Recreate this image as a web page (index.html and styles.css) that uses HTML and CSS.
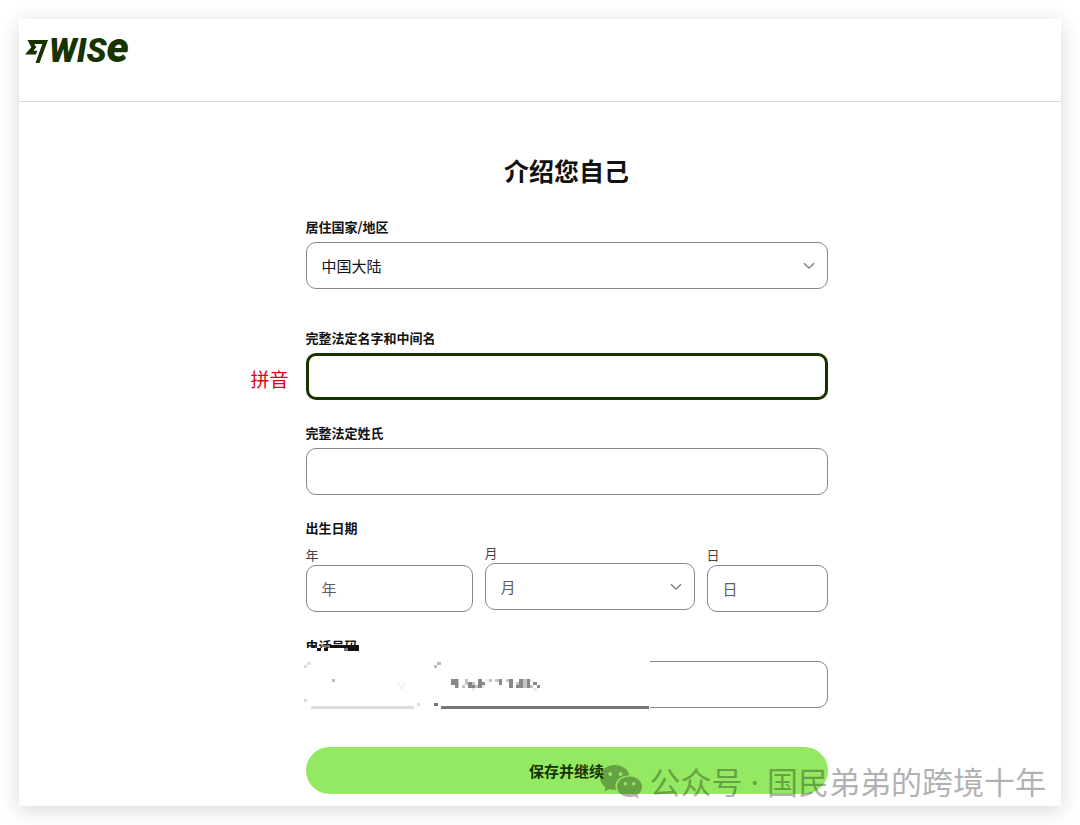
FILE: index.html
```html
<!DOCTYPE html>
<html lang="zh-CN">
<head>
<meta charset="utf-8">
<title>Wise</title>
<link rel="stylesheet" href="styles.css">
</head>
<body>
<div class="card">
  <header class="header">
    <a class="logo" href="#" aria-label="Wise">
      <svg class="flag" viewBox="0 0 23 23" aria-hidden="true"><path d="M2.500 0H23L14.500 23H10.500L17.300 4H9.200L11.300 7.300L8.400 10.800H12.200L11 14.500H0L6.300 7.200Z"/></svg>
      <span class="wordmark">WIS<span class="wordmark-e">e</span></span>
    </a>
  </header>
  <main class="main">
    <form class="form">
      <h1 class="title">介绍您自己</h1>
      <div class="field country">
        <label class="label" for="country">居住国家/地区</label>
        <div class="select-wrap">
          <select class="control" id="country"><option>中国大陆</option></select>
          <svg class="chevron" viewBox="0 0 12 8" aria-hidden="true"><path d="M1 1.200L6 6.200L11 1.200"/></svg>
        </div>
      </div>
      <div class="field">
        <label class="label" for="given">完整法定名字和中间名</label>
        <div class="noted">
          <input class="control active" id="given" type="text">
          <span class="note">拼音</span>
        </div>
      </div>
      <div class="field">
        <label class="label" for="family">完整法定姓氏</label>
        <input class="control" id="family" type="text">
      </div>
      <fieldset class="birth">
        <legend class="label">出生日期</legend>
        <div class="birth-row">
          <div class="part year"><label class="sublabel" for="year">年</label><input class="control" id="year" placeholder="年"></div>
          <div class="part month"><label class="sublabel" for="month">月</label>
            <div class="select-wrap">
              <select class="control muted" id="month"><option>月</option></select>
              <svg class="chevron" viewBox="0 0 12 8" aria-hidden="true"><path d="M1 1.200L6 6.200L11 1.200"/></svg>
            </div>
          </div>
          <div class="part day"><label class="sublabel" for="day">日</label><input class="control" id="day" placeholder="日"></div>
        </div>
      </fieldset>
      <div class="field phone">
        <label class="label" for="phone">电话号码</label>
        <input class="control" id="phone" type="tel">
        <svg class="mask" viewBox="0 0 348 76" aria-hidden="true">
          <path fill="#fff" d="M0 12H60V76H0ZM0 21H348V76H0Z"/>
          <path fill="#111" d="M10 9H13V12H10ZM15 12H19V15H15ZM22 12H26V15H22ZM28 9H57V12H28ZM46 12H57V15H46Z"/>
          <path fill="#777" d="M19 9H28V11H19ZM42 12H46V15H42Z"/>
          <path fill="#ddd" d="M2 29H5V32H2ZM5 26H9V29H5ZM2 63H5V66H2ZM9 70H112V73H9ZM115 67H118V70H115Z"/>
          <path fill="#f2f2f2" d="M95 47H98V50H95ZM98 50H101V53H98ZM101 47H104V50H101Z"/>
          <path fill="#bbb" d="M30 43H33V46H30ZM132 29H135V32H132ZM135 26H139V29H135Z"/>
          <path fill="#767676" d="M132 67H136V70H132ZM139 70H347V73H139Z"/>
          <path fill="#888" d="M149 43H156V52H153V49H149ZM166 46H170V49H173V52H166ZM176 43H180V46H183V49H180V52H176ZM197 43H200V49H197ZM207 43H211V52H207ZM217 43H221V52H214V49H217ZM225 43H228V52H225ZM231 46H235V49H238V52H235V49H231Z"/>
          <path fill="#c4c4c4" d="M156 43H157V52H156ZM160 49H163V52H160ZM163 43H166V49H163ZM170 46H173V49H170ZM173 49H176V52H173ZM187 43H190V46H187ZM193 43H197V46H193ZM204 43H207V46H204ZM214 46H217V49H214ZM221 43H225V52H221ZM228 49H231V52H228Z"/>
          <path fill="#eee" d="M170 52H173V55H170ZM180 49H183V52H180ZM183 43H187V46H183ZM228 43H231V46H228ZM231 52H235V55H231Z"/>
        </svg>
      </div>
      <button class="submit" type="submit">保存并继续</button>
    </form>
  </main>
  <div class="watermark">
    <svg class="wechat" viewBox="0 0 42 34" aria-hidden="true"><path fill-rule="evenodd" d="M15 0C6.500 0 0 5.500 0 12.500C0 16.500 2 20 5.500 22.300L4.200 26.500L9.200 23.900C11.500 24.600 13.500 24.900 16 24.700C13.500 17 19.500 10.500 29.500 10.200C28 4.200 22.200 0 15 0ZM10.200 7A2 2 0 1 1 10.200 11A2 2 0 1 1 10.200 7ZM20.500 7A2 2 0 1 1 20.500 11A2 2 0 1 1 20.500 7Z"/><path fill-rule="evenodd" d="M29.500 11.500C22.500 11.500 17 16 17 21.700C17 27.500 22.500 32 29.500 32C31.200 32 33 31.700 34.500 31.200L38.600 33.500L37.600 29.800C40.300 27.800 42 25 42 21.700C42 16 36.500 11.500 29.500 11.500ZM25.400 17A1.700 1.700 0 1 1 25.400 20.400A1.700 1.700 0 1 1 25.400 17ZM33.700 17A1.700 1.700 0 1 1 33.700 20.400A1.700 1.700 0 1 1 33.700 17Z"/></svg>
    <span>公众号 · 国民弟弟的跨境十年</span>
  </div>
</div>
</body>
</html>
```

FILE: styles.css
```css
* { box-sizing: border-box; }
body {
  margin: 0;
  padding: 19px;
  background: #fff;
  color: #111;
  font-family: "Noto Sans CJK SC", sans-serif;
}
.card {
  position: relative;
  background: #fff;
  box-shadow: 0 4px 20px rgba(0, 0, 0, 0.16);
}
.header {
  height: 83px;
  padding: 21px 6px;
  border-bottom: 1px solid #dcdcdc;
}
.logo {
  display: flex;
  align-items: flex-start;
  gap: 1px;
  width: max-content;
  color: #163300;
  text-decoration: none;
}
.flag { width: 23px; height: 23px; fill: currentColor; }
.wordmark {
  font: italic 900 33px/16px Roboto, sans-serif;
}
.wordmark-e { font-size: 42px; }
.main { padding: 50px 0 12px 53px; }
.form { width: 522px; max-width: 100%; margin: 0 auto; }
.title {
  margin: 0 0 29px;
  font-size: 25px;
  line-height: 36px;
  font-weight: 700;
  text-align: center;
}
.field { margin-bottom: 23px; }
.country { margin-bottom: 39px; }
.label {
  display: block;
  padding: 0;
  margin-bottom: 5px;
  font-size: 13px;
  line-height: 20px;
  font-weight: 700;
}
.control {
  display: block;
  width: 100%;
  height: 47px;
  padding: 0 15px;
  border: 1px solid #868686;
  border-radius: 10px;
  background: #fff;
  color: #111;
  font-family: inherit;
  font-size: 15px;
  appearance: none;
  outline: none;
}
.control.active { border: 3px solid #163300; }
.control.muted, .control::placeholder { color: #5d5d5d; opacity: 1; }
.select-wrap, .noted, .phone { position: relative; }
.chevron {
  position: absolute;
  right: 13px;
  top: 20px;
  width: 12px;
  height: 8px;
  fill: none;
  stroke: #777;
  stroke-width: 1.3;
}
.note {
  position: absolute;
  right: 100%;
  top: 12px;
  margin-right: 17px;
  color: #e00012;
  font-size: 19px;
  line-height: 28px;
  white-space: nowrap;
}
.birth { margin: 0 0 24px; padding: 0; border: 0; }
.birth-row { display: flex; gap: 12px; }
.year { flex: 167; padding-top: 2px; }
.month { flex: 210; }
.day { flex: 121; padding-top: 2px; }
.part { min-width: 0; }
.sublabel {
  display: block;
  color: #444;
  font-size: 13px;
  line-height: 20px;
}
.phone { margin-bottom: 39px; }
.mask {
  position: absolute;
  left: -4px;
  top: 0;
  width: 348px;
  height: 76px;
}
.submit {
  display: block;
  width: 100%;
  height: 47px;
  border: 0;
  border-radius: 24px;
  background: #94e962;
  color: #163300;
  font-family: inherit;
  font-size: 15px;
  font-weight: 700;
}
.watermark {
  position: absolute;
  right: 15px;
  bottom: 2px;
  display: flex;
  align-items: center;
  gap: 8px;
  color: #000;
  opacity: 0.3;
  font-family: "Noto Sans", "Noto Sans CJK SC", sans-serif;
  font-size: 31px;
  line-height: 44px;
  white-space: nowrap;
}
.wechat { width: 42px; height: 34px; fill: currentColor; }
```
